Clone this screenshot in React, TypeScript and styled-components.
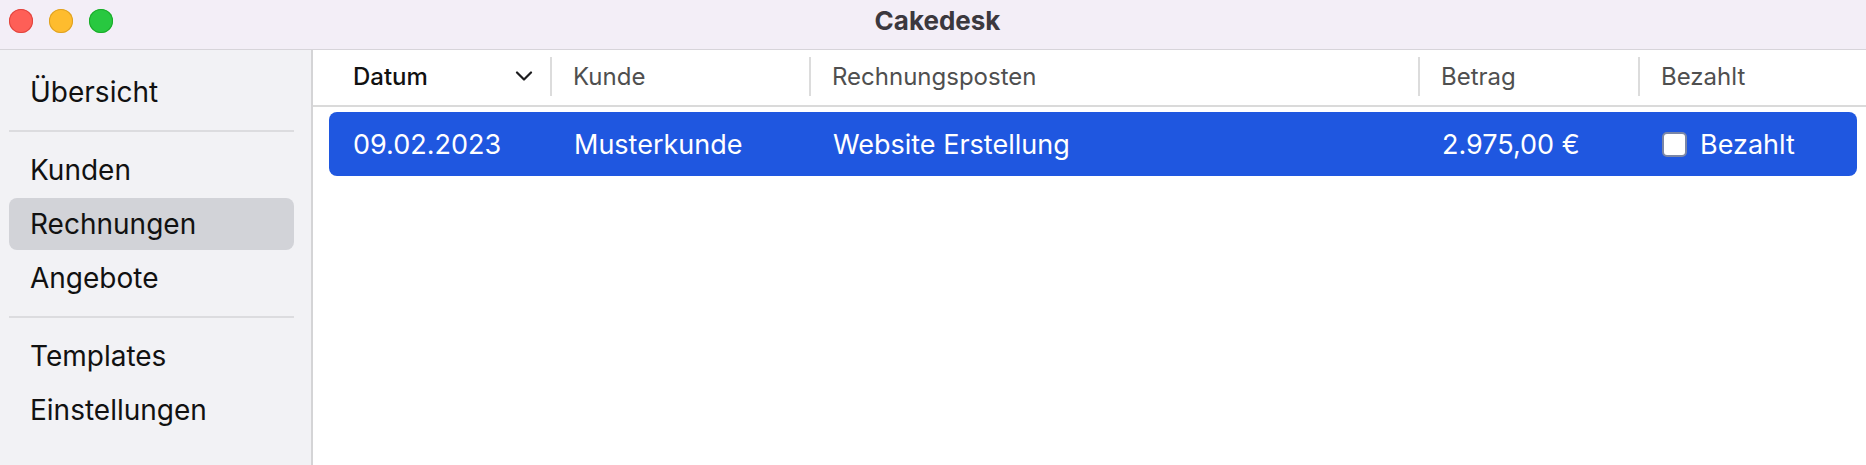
import styled, { createGlobalStyle } from 'styled-components';

const GlobalStyle = createGlobalStyle`
  html, body {
    margin: 0;
    padding: 0;
    background: #ffffff;
  }
  body {
    font-family: Inter, "Noto Sans", "Liberation Sans", sans-serif;
    -webkit-font-smoothing: antialiased;
  }
  * {
    box-sizing: border-box;
  }
`;

const COLUMNS = '221px 259px 609px 220px 1fr';

const navGroups = [['Übersicht'], ['Kunden', 'Rechnungen', 'Angebote'], ['Templates', 'Einstellungen']];

interface IInvoice {
  date: string;
  customer: string;
  item: string;
  amount: string;
  paid: boolean;
}

const invoices: IInvoice[] = [
  { date: '09.02.2023', customer: 'Musterkunde', item: 'Website Erstellung', amount: '2.975,00 €', paid: false },
];

function ChevronDown() {
  return (
    <svg width="18" height="10" viewBox="0 0 18 10" fill="none">
      <path d="M2 1.5 L9 8.5 L16 1.5" stroke="#1c1c1e" strokeWidth="2.2" strokeLinecap="round" strokeLinejoin="round" />
    </svg>
  );
}

export default function App() {
  return (
    <>
      <GlobalStyle />
      <S.Window>
        <S.TitleBar>
          <S.Lights>
            <S.Light $color="#fe5f57" $edge="#e0443e" />
            <S.Light $color="#febc2e" $edge="#dea123" />
            <S.Light $color="#28c840" $edge="#1aab29" />
          </S.Lights>
          <S.Title>Cakedesk</S.Title>
          <div />
        </S.TitleBar>
        <S.Body>
          <S.Sidebar>
            {navGroups.map((group, gi) => (
              <div key={gi}>
                {gi > 0 && <S.Divider />}
                <S.NavGroup>
                  {group.map((label) => (
                    <S.NavItem key={label} $active={label === 'Rechnungen'}>
                      {label}
                    </S.NavItem>
                  ))}
                </S.NavGroup>
              </div>
            ))}
          </S.Sidebar>
          <S.Main>
            <S.HeaderBar>
              <S.HeaderRow>
                <S.HeaderCell $first $sorted>
                  <span>Datum</span>
                  <ChevronDown />
                </S.HeaderCell>
                <S.HeaderCell>Kunde</S.HeaderCell>
                <S.HeaderCell>Rechnungsposten</S.HeaderCell>
                <S.HeaderCell>Betrag</S.HeaderCell>
                <S.HeaderCell>Bezahlt</S.HeaderCell>
              </S.HeaderRow>
            </S.HeaderBar>
            <S.Rows>
              {invoices.map((inv) => (
                <S.Row key={inv.date + inv.customer} $selected>
                  <S.Cell>{inv.date}</S.Cell>
                  <S.Cell>{inv.customer}</S.Cell>
                  <S.Cell>{inv.item}</S.Cell>
                  <S.Cell>{inv.amount}</S.Cell>
                  <S.Cell>
                    <S.CheckBox $checked={inv.paid} />
                    Bezahlt
                  </S.Cell>
                </S.Row>
              ))}
            </S.Rows>
          </S.Main>
        </S.Body>
      </S.Window>
    </>
  );
}

const S = {
  Window: styled.div`
    display: flex;
    flex-direction: column;
    width: 1866px;
    height: 465px;
    overflow: hidden;
    background: #ffffff;
  `,
  TitleBar: styled.div`
    display: grid;
    grid-template-columns: 1fr auto 1fr;
    align-items: center;
    height: 50px;
    padding: 0 0 8px 9px;
    background: #f3eef7;
    border-bottom: 1px solid #d7d4da;
  `,
  Lights: styled.div`
    display: flex;
    gap: 16px;
  `,
  Light: styled.span<{ $color: string; $edge: string }>`
    width: 24px;
    height: 24px;
    border-radius: 50%;
    background: ${(p) => p.$color};
    box-shadow: inset 0 0 0 1px ${(p) => p.$edge};
  `,
  Title: styled.h1`
    margin: 0;
    font-size: 26px;
    font-weight: 700;
    color: #3b383e;
    line-height: 1;
  `,
  Body: styled.div`
    display: flex;
    flex: 1;
    min-height: 0;
  `,
  Sidebar: styled.nav`
    width: 313px;
    flex-shrink: 0;
    padding: 16px 17px 0 9px;
    background: #f2f2f5;
    border-right: 2px solid #d4d4d6;
  `,
  NavGroup: styled.div`
    display: flex;
    flex-direction: column;
    gap: 2px;
  `,
  NavItem: styled.div<{ $active?: boolean }>`
    display: flex;
    align-items: center;
    height: 52px;
    padding-left: 21px;
    border-radius: 8px;
    font-size: 28px;
    color: #111111;
    background: ${(p) => (p.$active ? '#d2d3d8' : 'transparent')};
  `,
  Divider: styled.hr`
    margin: 12px 0;
    border: none;
    height: 2px;
    background: #dcdcdf;
  `,
  Main: styled.main`
    flex: 1;
    display: flex;
    flex-direction: column;
    min-width: 0;
  `,
  HeaderBar: styled.div`
    height: 57px;
    padding: 0 9px 3px 16px;
    border-bottom: 2px solid #dadada;
  `,
  HeaderRow: styled.div`
    display: grid;
    grid-template-columns: ${COLUMNS};
    align-items: center;
    height: 100%;
  `,
  HeaderCell: styled.div<{ $first?: boolean; $sorted?: boolean }>`
    display: flex;
    align-items: center;
    justify-content: ${(p) => (p.$first ? 'space-between' : 'flex-start')};
    height: 39px;
    padding: 0 17px 0 ${(p) => (p.$first ? '24px' : '21px')};
    border-left: ${(p) => (p.$first ? 'none' : '2px solid #dcdcdc')};
    font-size: 24px;
    font-weight: ${(p) => (p.$sorted ? 500 : 400)};
    color: ${(p) => (p.$sorted ? '#111111' : '#4f4f4f')};
  `,
  Rows: styled.div`
    display: flex;
    flex-direction: column;
    padding: 5px 9px 0 16px;
  `,
  Row: styled.div<{ $selected?: boolean }>`
    display: grid;
    grid-template-columns: ${COLUMNS};
    align-items: center;
    height: 64px;
    border-radius: 8px;
    background: ${(p) => (p.$selected ? '#1f57e0' : 'transparent')};
    color: ${(p) => (p.$selected ? '#ffffff' : '#111111')};
  `,
  Cell: styled.div`
    display: flex;
    align-items: center;
    gap: 13px;
    padding-left: 24px;
    font-size: 27px;
    white-space: nowrap;
  `,
  CheckBox: styled.span<{ $checked?: boolean }>`
    width: 25px;
    height: 25px;
    border-radius: 5px;
    background: ${(p) => (p.$checked ? '#1f57e0' : '#ffffff')};
    border: 2px solid #7a86a6;
  `,
};
